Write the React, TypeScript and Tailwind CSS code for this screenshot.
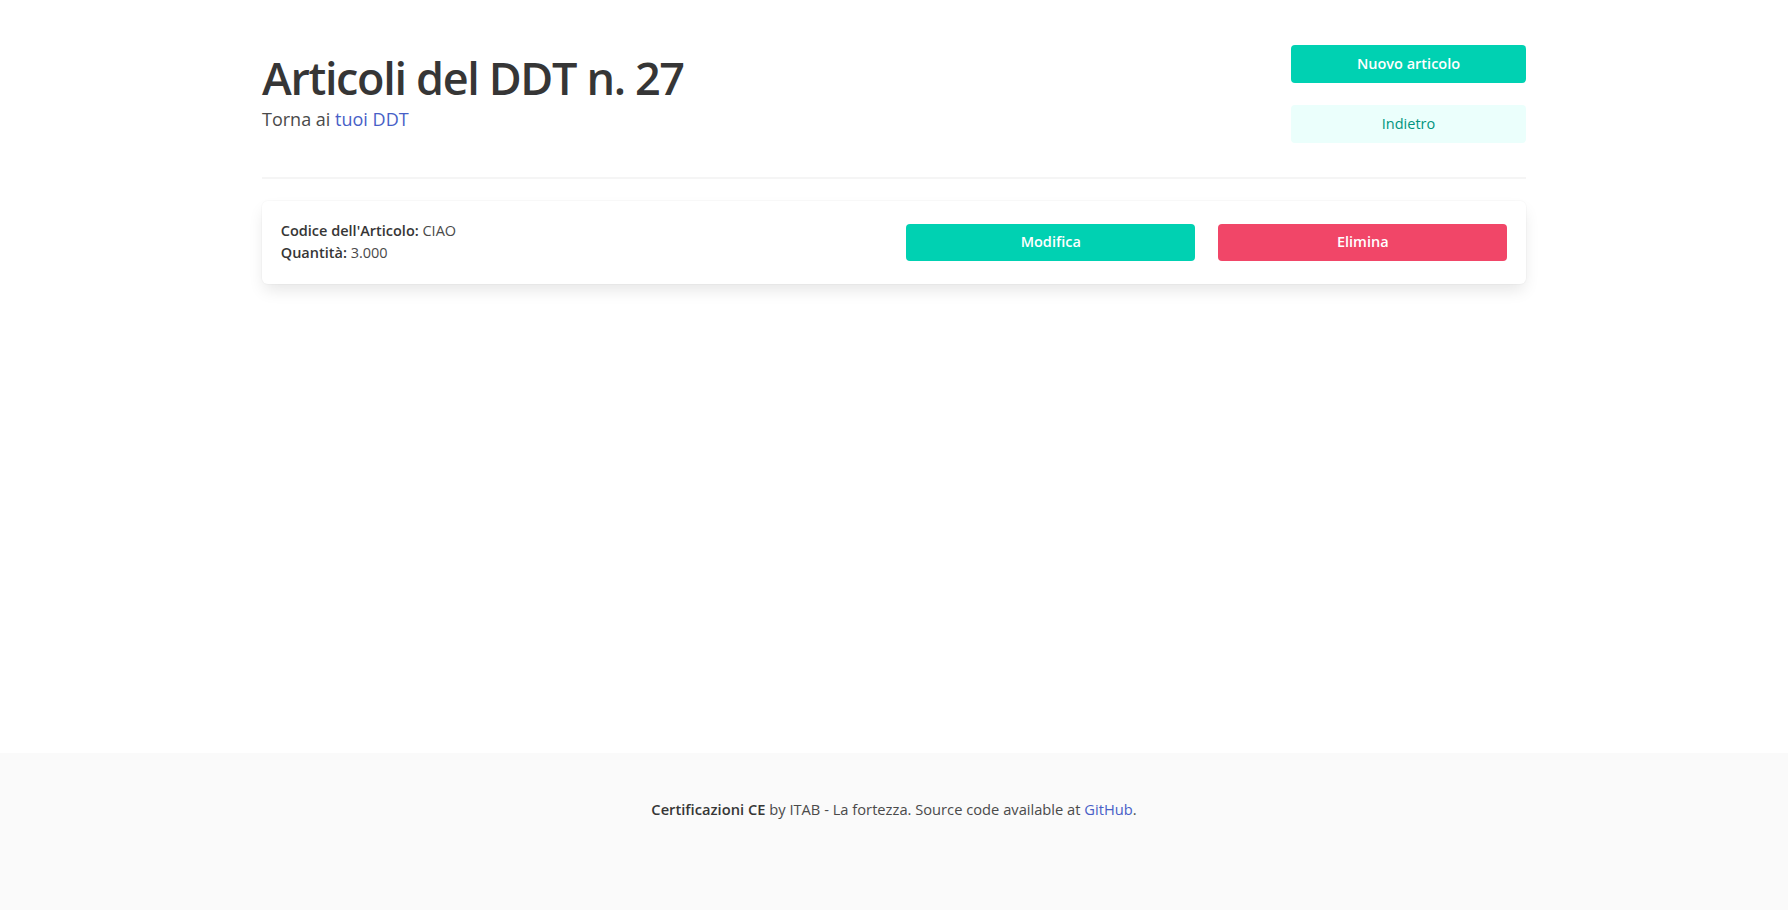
export default function App() {
  return (
    <div
      className="min-h-screen flex flex-col bg-white text-[#4a4a4a]"
      style={{ fontFamily: '"Open Sans", "Noto Sans", sans-serif' }}
    >
      <main className="flex-1 pt-[45px]">
        <div className="max-w-[1264px] mx-auto">
          <div className="flex justify-between items-start">
            <div className="pt-[8px]">
              <h1 className="text-[45px] leading-[50px] tracking-[-1.35px] font-semibold text-[#363636]">
                Articoli del DDT n. 27
              </h1>
              <p className="text-[18px] leading-[24px] mt-[4px]">
                Torna ai{" "}
                <a href="#" className="text-[#485fc7]">
                  tuoi DDT
                </a>
              </p>
            </div>
            <div className="w-[235px] flex flex-col gap-[22.5px]">
              <button className="h-[37.5px] rounded-[4px] bg-[#00d1b2] text-white text-[14.5px] font-semibold">
                Nuovo articolo
              </button>
              <button className="h-[37.5px] rounded-[4px] bg-[#ebfffc] text-[#00947e] text-[14.5px]">Indietro</button>
            </div>
          </div>

          <hr className="mt-[34px] border-0 h-[2px] bg-[#f5f5f5]" />

          <div className="mt-[22.5px] rounded-[6px] bg-white p-[18.75px] shadow-[0_0.5em_1em_-0.125em_rgba(10,10,10,0.1),0_0_0_1px_rgba(10,10,10,0.02)] grid grid-cols-[1fr_289px_289px] gap-x-[23px] items-center">
            <div className="text-[14.5px] leading-[22.5px]">
              <p>
                <strong className="font-semibold text-[#363636]">Codice dell'Articolo:</strong> CIAO
              </p>
              <p>
                <strong className="font-semibold text-[#363636]">Quantità:</strong> 3.000
              </p>
            </div>
            <button className="h-[37.5px] rounded-[4px] bg-[#00d1b2] text-white text-[14.5px] font-semibold">
              Modifica
            </button>
            <button className="h-[37.5px] rounded-[4px] bg-[#f14668] text-white text-[14.5px] font-semibold">
              Elimina
            </button>
          </div>
        </div>
      </main>

      <footer className="bg-[#fafafa] pt-[45px] pb-[90px] px-6 text-center text-[14.7px] leading-[22.5px]">
        <p>
          <strong className="font-semibold text-[#363636]">Certificazioni CE</strong> by ITAB - La fortezza. Source code
          available at{" "}
          <a href="#" className="text-[#485fc7]">
            GitHub
          </a>
          .
        </p>
      </footer>
    </div>
  );
}
